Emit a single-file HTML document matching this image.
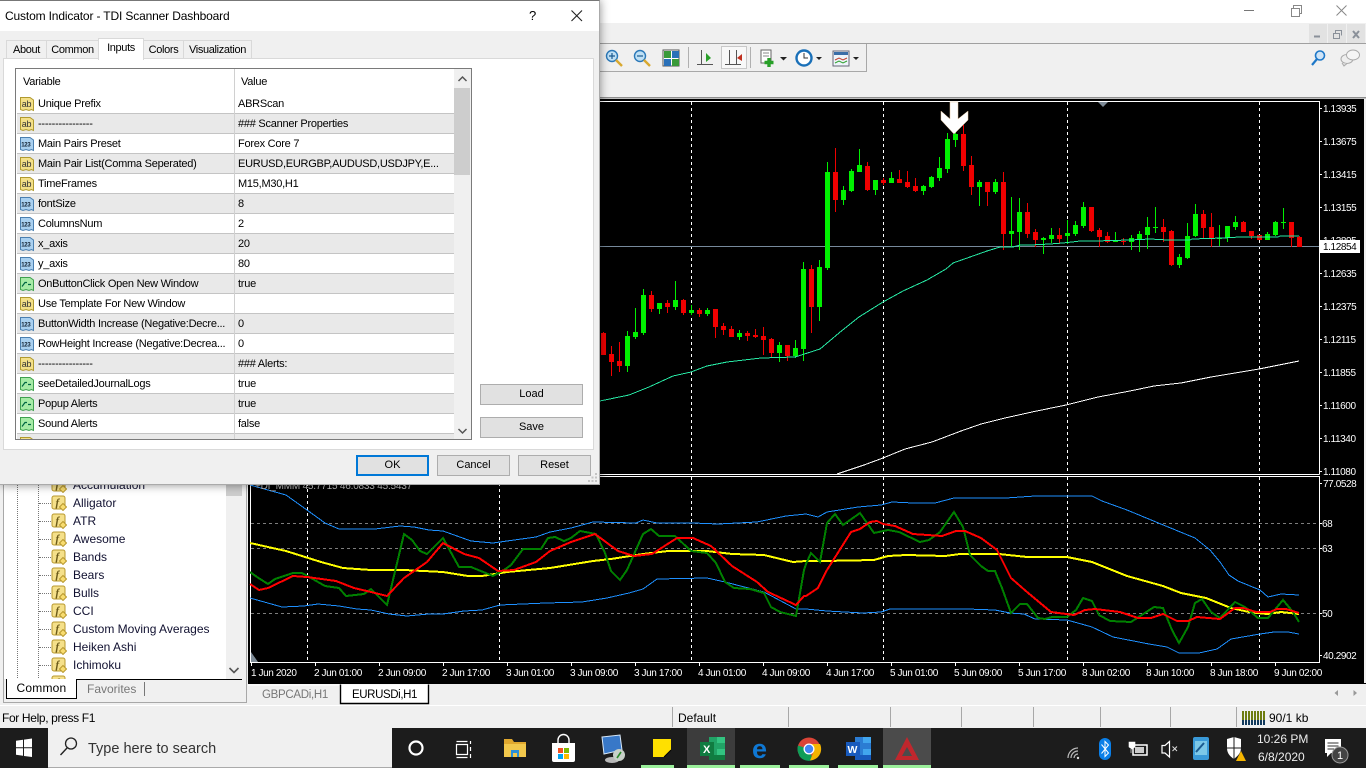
<!DOCTYPE html>
<html><head><meta charset="utf-8"><title>TDI Scanner</title>
<style>
*{box-sizing:border-box}
html,body{margin:0;padding:0;width:1366px;height:768px;overflow:hidden;background:#f0f0f0;font-family:"Liberation Sans",sans-serif;color:#000}
.a{position:absolute}
.t{position:absolute;white-space:nowrap;line-height:14px}
#dlg{position:absolute;left:0;top:0;width:600px;height:485px;background:#f0f0f0;box-shadow:0 0 9px rgba(0,0,0,.45);border-top:1px solid #777;border-right:1px solid #aaa;border-bottom:1px solid #aaa;font-size:11px;letter-spacing:-.25px}
.tab{position:absolute;top:40px;height:19px;background:#f0f0f0;border:1px solid #d9d9d9;text-align:center;line-height:18px;font-size:11px;letter-spacing:-.35px}
.row{position:absolute;left:1px;width:438px;height:20px;border-bottom:1px solid #c4c4c4;background:#fff}
.row.g{background:#e9e9e9}
.row .n{position:absolute;left:21px;top:2px;line-height:16px;white-space:nowrap}
.row .v{position:absolute;left:221px;top:2px;line-height:16px;white-space:nowrap}
.row svg{position:absolute;left:2px;top:2px}
.btn{position:absolute;background:#e1e1e1;border:1px solid #adadad;text-align:center;font-size:11px;letter-spacing:0}
.tr{position:absolute;left:73px;font-size:12px;line-height:14px;white-space:nowrap;color:#101030}
.dh{position:absolute;border-top:1px dotted #777;width:12px;left:39px}
.fi{position:absolute;left:51px}
.ln{shape-rendering:crispEdges}
</style></head><body>

<svg width="0" height="0" style="position:absolute">
<defs>
<symbol id="ab" viewBox="0 0 16 16"><path d="M1.5 1.5H11L14.5 4V14.5L12.500 13.500L10 14.500L7 13.500L4 14.500L1.500 13.500Z" fill="#f4e088" stroke="#b09a30"/><text x="2.7" y="11" font-size="9" font-family="Liberation Sans" fill="#333">ab</text></symbol>
<symbol id="n1" viewBox="0 0 16 16"><path d="M1.5 1.5H11L14.5 4V14.5L12.500 13.500L10 14.500L7 13.500L4 14.500L1.500 13.500Z" fill="#a9d0f0" stroke="#4a7fb0"/><text x="2.2" y="10.5" font-size="6" font-weight="bold" font-family="Liberation Sans" fill="#123">123</text></symbol>
<symbol id="gr" viewBox="0 0 16 16"><path d="M1.5 1.5H11L14.5 4V14.5L12.500 13.500L10 14.500L7 13.500L4 14.500L1.500 13.500Z" fill="#a6eba6" stroke="#3fa04f"/><path d="M3 10.500L6 6.500H8M9 8.500H12" fill="none" stroke="#064" stroke-width="1.2"/></symbol>
<symbol id="fx" viewBox="0 0 16 16"><rect x="1" y="1" width="13" height="13" rx="2" fill="#f5e08a" stroke="#b8982e"/><text x="4.5" y="11" font-size="11" font-style="italic" font-weight="bold" font-family="Liberation Serif" fill="#6b5a1a">f</text><path d="M12 8.500L15.500 12L12 15.500L8.500 12Z" fill="#f8dc70" stroke="#b8982e"/></symbol>
</defs>
</svg>

<!-- main window chrome -->
<div class="a" style="left:600px;top:0;width:766px;height:23px;background:#fff"></div>
<svg class="a" style="left:0;top:0" width="1366" height="768" font-family="Liberation Sans">
<!-- window buttons -->
<path d="M1244 10.500H1254" stroke="#777"/>
<path d="M1291.500 8.500H1299.500V16.500H1291.500ZM1293.500 8V5.500H1301.500V13.500H1300" fill="none" stroke="#888"/>
<path d="M1336.500 5.500L1346.500 15.500M1346.500 5.500L1336.500 15.500" stroke="#888"/>
<rect x="1309" y="24" width="18" height="19" fill="#e2e2e2"/><rect x="1328" y="24" width="18" height="19" fill="#e2e2e2"/><rect x="1347" y="24" width="18" height="19" fill="#e2e2e2"/>
<path d="M1314 36.500H1320" stroke="#8a9099" stroke-width="2"/>
<path d="M1333.500 33.500H1339.500V38.500H1333.500ZM1335.500 33V30.500H1341.500V35.500" fill="none" stroke="#8a9099"/>
<path d="M1353 31L1359 38M1359 31L1353 38" stroke="#8a9099" stroke-width="2"/>
<rect x="600" y="43" width="766" height="1" fill="#a0a0a0"/>
<path d="M600 71.500H866.500V44" fill="none" stroke="#a8a8a8"/>
<!-- toolbar icons -->
<g>
<circle cx="612" cy="56" r="5.500" fill="#bfe0f5" stroke="#2a78b8" stroke-width="1.4"/><path d="M609 56H615M612 53V59" stroke="#1a5a90" stroke-width="1.2"/><path d="M616 60L622 66" stroke="#d8a830" stroke-width="2.4"/>
<circle cx="640" cy="56" r="5.500" fill="#bfe0f5" stroke="#2a78b8" stroke-width="1.4"/><path d="M637 56H643" stroke="#1a5a90" stroke-width="1.2"/><path d="M644 60L650 66" stroke="#d8a830" stroke-width="2.4"/>
<rect x="663" y="50" width="16" height="16" fill="#fff" stroke="#555"/><rect x="664" y="51" width="7" height="7" fill="#3a9a3a"/><rect x="672" y="51" width="7" height="7" fill="#2a70b8"/><rect x="664" y="59" width="7" height="7" fill="#2a70b8"/><rect x="672" y="59" width="7" height="7" fill="#3a9a3a"/>
<path d="M688.500 47V68M750.500 47V68" stroke="#b0b0b0"/>
<path d="M701.500 50V64M697 64.500H713" stroke="#555" fill="none"/><path d="M706 53L711 58L706 62Z" fill="#2aa02a"/>
<rect x="721.500" y="46.500" width="25" height="22" fill="#f8f8f8" stroke="#c8c8c8"/>
<path d="M729.500 50V64M725 64.500H741M736.500 50V64" stroke="#555" fill="none"/><path d="M742 54L737 58L742 61Z" fill="#c03020"/>
<rect x="761" y="50" width="10" height="13" fill="#fff" stroke="#666"/><path d="M763 53H769M763 56H769" stroke="#888"/><path d="M769 58V67M764.500 62.500H773.500" stroke="#28a028" stroke-width="3.4"/>
<path d="M780 57H787L783.500 60.500Z" fill="#222"/>
<circle cx="804" cy="58" r="7.500" fill="#fff" stroke="#1a70b8" stroke-width="2.4"/><path d="M804 53V58H808" stroke="#333" fill="none"/>
<path d="M816 57H822L819 60Z" fill="#222"/>
<rect x="833" y="51" width="16" height="15" fill="#eef4fa" stroke="#667"/><rect x="834" y="52" width="14" height="3" fill="#3a6ea8"/><path d="M835 60L839 58L843 60L847 58" stroke="#c04030" fill="none"/><path d="M835 63L839 61L843 63L847 61" stroke="#30a030" fill="none"/>
<path d="M853 57H859L856 60Z" fill="#222"/>
<circle cx="1320" cy="55.500" r="4.500" fill="#cfe4f7" stroke="#1e78c8" stroke-width="1.6"/><path d="M1317 59L1312 65" stroke="#1e78c8" stroke-width="2.2"/>
<ellipse cx="1347" cy="59" rx="6" ry="4.500" fill="#eee" stroke="#aaa"/><ellipse cx="1353" cy="55" rx="6.500" ry="5" fill="#f5f5f5" stroke="#aaa"/><path d="M1342 63L1344 66L1347 63.500" fill="#ddd" stroke="#aaa"/>
</g>
<rect x="600" y="97" width="766" height="1.500" fill="#8e8e8e"/>

<!-- chart background -->
<rect x="248" y="99" width="1116" height="584" fill="#000"/>
<path d="M250 101.500H1319.500V474.500M250 474.500H1319.500M250 476.500H1319.500V662.500H250.500V476" fill="none" stroke="#fff"/>
<!-- grid verticals -->
<path d="M691.500 102V474M883.500 102V474M1067.500 102V474M1259.500 102V474M307.500 477V662M499.500 477V662M691.500 477V662M883.500 477V662M1067.500 477V662M1259.500 477V662" stroke="#fff" stroke-dasharray="3 3"/>
<!-- sub horizontals -->
<path d="M251 523.500H1319M251 548.500H1319M251 613.500H1319" stroke="#7d7d7d" stroke-dasharray="3 3"/>
<!-- price line -->
<path d="M600 246.500H1319" stroke="#76899b"/>
<path d="M1098 102H1108L1103 107Z" fill="#7d8a96"/>
<path d="M251 652V662H258Z" fill="#7d8a96"/>

<!-- candles: wicks -->
<path stroke="#00f000" fill="none" d="M627.500 331V372M635.500 308V339M643.500 289V335M659.500 303V314M675.500 281V310M691.500 305V315M707.500 308V316M739.500 330V340M779.500 342V362M795.500 340V358M803.500 262V361M819.500 260V321M827.500 162V270M843.500 186V205M851.500 169V192M859.500 149V172M875.500 180V195M891.500 172V183M923.500 185V195M931.500 176V188M939.500 157V181M947.500 133V173M955.500 130V147M979.500 180V206M995.500 179V194M1011.500 197V247M1019.500 198V250M1043.500 237V254M1051.500 228V243M1067.500 220V244M1075.500 221V236M1083.500 202V228M1115.500 232V242M1131.500 235V250M1139.500 231V252M1147.500 217V249M1155.500 207V233M1179.500 254V268M1187.500 223V259M1195.500 204V237M1219.500 225V246M1227.500 226V242M1235.500 216V230M1267.500 232V240M1275.500 221V236M1283.500 208V229"/>
<path stroke="#f00000" fill="none" d="M603.500 332V355M611.500 346V376M619.500 342V372M651.500 291V312M667.500 300V313M683.500 299V315M699.500 308V317M715.500 309V338M723.500 323V335M731.500 326V337M747.500 331V341M755.500 329V338M763.500 327V355M771.500 338V357M787.500 345V361M811.500 265V333M835.500 148V212M867.500 162V191M883.500 178V185M899.500 170V183M907.500 171V188M915.500 178V192M963.500 125V171M971.500 156V195M987.500 182V206M1003.500 172V250M1027.500 203V238M1035.500 229V247M1059.500 228V244M1091.500 207V232M1099.500 228V247M1107.500 232V243M1123.500 238V245M1163.500 219V242M1171.500 230V266M1203.500 210V239M1211.500 213V247M1243.500 221V232M1251.500 231V239M1259.500 235V240M1291.500 222V247M1299.500 236V247"/>
<!-- candles: bodies -->
<path stroke="#00f000" stroke-width="5" fill="none" d="M627.500 336V366M635.500 332V337M643.500 295V333M659.500 303V309M675.500 300V307M691.500 310V313M707.500 310V314M739.500 333V337M779.500 345V353M795.500 348V356M803.500 269V349M819.500 267V307M827.500 172V268M843.500 190V200M851.500 171V191M859.500 165V172M875.500 180V190M891.500 178V183M923.500 186V191M931.500 177V187M939.500 168V178M947.500 139V169M955.500 134V140M979.500 182V187M995.500 182V192M1011.500 231V234M1019.500 212V232M1043.500 238V240M1051.500 235V239M1067.500 233V236M1075.500 225V234M1083.500 207V226M1115.500 240V242M1131.500 238V242M1139.500 234V239M1147.500 227V235M1155.500 227V228M1179.500 257V265M1187.500 236V258M1195.500 214V236M1219.500 238V239M1227.500 226V238M1235.500 222V227M1267.500 234V240M1275.500 222V235M1283.500 222V223"/>
<path stroke="#f00000" stroke-width="5" fill="none" d="M603.500 333V355M611.500 354V362M619.500 361V366M651.500 295V309M667.500 303V307M683.500 300V313M699.500 310V314M715.500 309V327M723.500 326V330M731.500 329V337M747.500 333V336M755.500 335V337M763.500 336V340M771.500 339V353M787.500 345V356M811.500 269V307M835.500 172V200M867.500 166V190M883.500 180V183M899.500 179V183M907.500 182V187M915.500 186V191M963.500 134V166M971.500 165V187M987.500 182V192M1003.500 182V234M1027.500 212V234M1035.500 232V240M1059.500 235V239M1091.500 207V231M1099.500 230V237M1107.500 236V242M1123.500 241V242M1163.500 227V232M1171.500 231V265M1203.500 214V228M1211.500 227V239M1243.500 222V232M1251.500 231V236M1259.500 235V240M1291.500 222V238M1299.500 237V247"/>

<!-- MA lines -->
<polyline class="ln" fill="none" stroke="#27e8a4" stroke-width="1" points="600,401 629,395 649,387 673,376 691,372 707,366 727,362 761,358 795,357 820,349 839,333 859,317 883,302 903,291 927,280 946,269 953,263 970,257 987,251 1000,247 1013,247 1020,245 1030,245 1050,244 1063,243 1072,242 1080,241 1095,241 1130,240 1150,239 1168,240 1190,240 1192,239 1223,238 1240,237 1278,237 1280,236 1299,236"/>
<polyline class="ln" fill="none" stroke="#fff" stroke-width="1" points="837,474 864,465 883,458 905,449 932,442 961,431 981,424 1005,418 1032,412 1066,405 1098,397 1130,391 1154,386 1181,383 1211,377 1259,369 1299,361"/>

<!-- sub indicators -->
<polyline class="ln" fill="none" stroke="#1e90ff" stroke-width="1" points="250,485 286,495 307,510 325,523 339,529 375,529 400,526 414,527 429,530 443,531 471,541 493,543 507,541 536,537 550,532 571,528 593,522 636,523 643,520 657,523 693,523 718,524 757,522 786,516 806,514 818,517 827,512 858,507 881,505 892,502 913,503 935,503 954,498 1006,498 1035,496 1092,496 1102,501 1127,510 1156,522 1195,538 1210,550 1220,562 1229,575 1238,581 1260,590 1268,597 1281,594 1299,595"/>
<polyline class="ln" fill="none" stroke="#1e90ff" stroke-width="1" points="250,598 282,607 304,606 318,604 339,606 357,609 371,610 389,614 407,616 429,614 443,614 464,611 482,610 500,605 546,603 582,602 607,598 629,593 643,589 657,579 707,578 725,582 764,592 796,609 806,609 827,611 863,613 881,612 890,609 967,609 995,610 1010,613 1024,614 1035,619 1067,620 1092,627 1113,637 1149,644 1167,647 1179,653 1199,653 1217,649 1231,639 1260,634 1274,632 1288,632 1299,634"/>
<polyline class="ln" fill="none" stroke="#ffff00" stroke-width="2" points="250,543 286,551 321,562 343,568 371,570 404,570 443,572 468,576 482,576 507,572 550,568 593,561 611,559 643,554 668,551 707,551 732,554 764,555 793,562 806,561 824,561 874,560 888,556 906,555 945,556 960,554 999,554 1027,557 1067,557 1092,562 1127,576 1163,586 1181,593 1206,598 1231,608 1249,612 1267,614 1281,612 1299,614"/>
<polyline class="ln" fill="none" stroke="#008000" stroke-width="2" points="250,572 257,577 268,584 275,579 293,573 302,573 311,578 325,586 339,588 346,596 364,594 371,589 387,605 404,534 412,540 420,551 427,554 443,538 454,558 459,567 471,567 493,576 504,570 511,565 523,549 541,549 548,538 555,537 564,541 571,538 580,531 596,534 605,553 611,571 620,580 627,570 643,534 651,529 659,536 675,536 691,551 707,553 716,563 725,582 734,588 750,589 764,593 771,607 780,612 796,616 804,570 806,564 811,553 820,562 827,523 835,514 843,525 860,513 874,533 888,530 899,532 920,542 929,540 940,532 954,512 963,527 970,555 981,566 988,571 995,571 1002,588 1011,613 1020,604 1027,604 1038,618 1045,619 1052,617 1067,617 1076,610 1083,598 1092,601 1099,615 1110,621 1131,622 1154,607 1163,608 1172,630 1179,643 1188,627 1195,603 1202,599 1211,612 1220,618 1235,602 1245,607 1258,618 1268,618 1283,600 1293,612 1299,622"/>
<polyline class="ln" fill="none" stroke="#ff0000" stroke-width="2" points="250,584 259,590 268,588 293,576 307,577 336,581 354,588 371,592 387,596 404,578 427,562 443,543 464,554 479,558 498,571 514,570 536,562 550,551 571,542 595,534 618,551 634,556 652,554 677,538 693,538 711,546 732,566 757,582 768,592 796,605 804,596 806,596 818,588 827,570 851,532 860,529 870,522 877,521 883,524 895,526 913,534 942,536 956,531 965,531 981,538 997,550 1011,578 1027,592 1051,612 1074,615 1085,610 1095,609 1120,612 1138,618 1151,618 1163,614 1177,621 1188,621 1197,617 1220,619 1235,608 1243,608 1256,612 1270,612 1277,609 1286,609 1299,613"/>

<!-- arrow -->
<path d="M950 102H958V119L968 111V120L954 134L941 120V111L950 119Z" fill="#fff" stroke="#e8c8a0" stroke-width=".5"/>

<!-- axis -->
<g font-size="10" letter-spacing="-.4" fill="#fff">
<text x="1323" y="112">1.13935</text><text x="1323" y="145">1.13675</text><text x="1323" y="178">1.13415</text><text x="1323" y="211">1.13155</text><text x="1323" y="244">1.12895</text>
<text x="1323" y="277">1.12635</text><text x="1323" y="310">1.12375</text><text x="1323" y="343">1.12115</text><text x="1323" y="376">1.11855</text><text x="1323" y="409">1.11600</text><text x="1323" y="442">1.11340</text><text x="1323" y="475">1.11080</text>
<text x="1323" y="487">77.0528</text><text x="1322" y="527">68</text><text x="1322" y="552">63</text><text x="1322" y="617">50</text><text x="1323" y="659">40.2902</text>
<text x="251" y="676">1 Jun 2020</text><text x="314" y="676">2 Jun 01:00</text><text x="378" y="676">2 Jun 09:00</text><text x="442" y="676">2 Jun 17:00</text><text x="506" y="676">3 Jun 01:00</text><text x="570" y="676">3 Jun 09:00</text><text x="634" y="676">3 Jun 17:00</text><text x="698" y="676">4 Jun 01:00</text><text x="762" y="676">4 Jun 09:00</text><text x="826" y="676">4 Jun 17:00</text><text x="890" y="676">5 Jun 01:00</text><text x="954" y="676">5 Jun 09:00</text><text x="1018" y="676">5 Jun 17:00</text><text x="1082" y="676">8 Jun 02:00</text><text x="1146" y="676">8 Jun 10:00</text><text x="1210" y="676">8 Jun 18:00</text><text x="1274" y="676">9 Jun 02:00</text>
</g>
<path d="M1319 108.500H1322M1319 141.500H1322M1319 174.500H1322M1319 207.500H1322M1319 240.500H1322M1319 273.500H1322M1319 306.500H1322M1319 339.500H1322M1319 372.500H1322M1319 405.500H1322M1319 438.500H1322M1319 471.500H1322M1319 483.500H1322M1319 523.500H1322M1319 548.500H1322M1319 613.500H1322M1319 655.500H1322M251.500 662V666M315.500 662V666M379.500 662V666M443.500 662V666M507.500 662V666M571.500 662V666M635.500 662V666M699.500 662V666M763.500 662V666M827.500 662V666M891.500 662V666M955.500 662V666M1019.500 662V666M1083.500 662V666M1147.500 662V666M1211.500 662V666M1275.500 662V666" stroke="#fff"/>
<rect x="1320" y="240" width="40" height="13" fill="#fff"/>
<text x="1323" y="250" font-size="10" letter-spacing="-.4" fill="#000">1.12854</text>
<text x="255" y="489" font-size="10" letter-spacing="-.2" fill="#bbb">+DI_MMM 45.7715 46.0833 45.5437</text>

<!-- document tabs -->
<rect x="248" y="683" width="1118" height="1" fill="#000"/>
<rect x="248" y="684" width="1118" height="21" fill="#f0f0f0"/>
<path d="M247.500 685H339.500" stroke="#fff"/>
<path d="M340.500 684.500V703.500H428.500V684.500" fill="#fff" stroke="#000" stroke-width="1.4"/>
<text x="262" y="698" font-size="11.500" fill="#777" letter-spacing="-.3">GBPCADi,H1</text>
<text x="352" y="698" font-size="11.500" fill="#000" letter-spacing="-.4">EURUSDi,H1</text>
<path d="M1338 690V696L1334.500 693ZM1353.500 690V696L1357 693Z" fill="#999"/>
</svg>

<!-- navigator -->
<div class="a" style="left:0;top:480px;width:248px;height:226px;background:#f0f0f0">
  <div class="a" style="left:3px;top:0;width:244px;height:223px;border-right:1px solid #a8a8a8;border-left:1px solid #a8a8a8;border-bottom:1px solid #a8a8a8"></div>
  <div class="a" style="left:4px;top:0;width:222px;height:199px;background:#fff;overflow:hidden">
    <div class="a" style="left:13px;top:0;height:200px;border-left:1px dotted #777"></div>
    <div class="a" style="left:34px;top:0;height:200px;border-left:1px dotted #777"></div>
  </div>
  <div class="a" style="left:226px;top:0;width:16px;height:199px;background:#f0f0f0"></div>
  <div class="a" style="left:226px;top:0;width:16px;height:16px;background:#cdcdcd"></div>
</div>
<div class="a" style="left:0;top:480px;width:226px;height:199px;overflow:hidden">
  <svg class="fi" style="top:-3px" width="16" height="16"><use href="#fx"/></svg><div class="tr" style="top:-2px">Accumulation</div>
  <div class="dh" style="top:23px"></div><svg class="fi" style="top:15px" width="16" height="16"><use href="#fx"/></svg><div class="tr" style="top:16px">Alligator</div>
  <div class="dh" style="top:41px"></div><svg class="fi" style="top:33px" width="16" height="16"><use href="#fx"/></svg><div class="tr" style="top:34px">ATR</div>
  <div class="dh" style="top:59px"></div><svg class="fi" style="top:51px" width="16" height="16"><use href="#fx"/></svg><div class="tr" style="top:52px">Awesome</div>
  <div class="dh" style="top:77px"></div><svg class="fi" style="top:69px" width="16" height="16"><use href="#fx"/></svg><div class="tr" style="top:70px">Bands</div>
  <div class="dh" style="top:95px"></div><svg class="fi" style="top:87px" width="16" height="16"><use href="#fx"/></svg><div class="tr" style="top:88px">Bears</div>
  <div class="dh" style="top:113px"></div><svg class="fi" style="top:105px" width="16" height="16"><use href="#fx"/></svg><div class="tr" style="top:106px">Bulls</div>
  <div class="dh" style="top:131px"></div><svg class="fi" style="top:123px" width="16" height="16"><use href="#fx"/></svg><div class="tr" style="top:124px">CCI</div>
  <div class="dh" style="top:149px"></div><svg class="fi" style="top:141px" width="16" height="16"><use href="#fx"/></svg><div class="tr" style="top:142px">Custom Moving Averages</div>
  <div class="dh" style="top:167px"></div><svg class="fi" style="top:159px" width="16" height="16"><use href="#fx"/></svg><div class="tr" style="top:160px">Heiken Ashi</div>
  <div class="dh" style="top:185px"></div><svg class="fi" style="top:177px" width="16" height="16"><use href="#fx"/></svg><div class="tr" style="top:178px">Ichimoku</div>
  <svg class="fi" style="top:195px" width="16" height="16"><use href="#fx"/></svg>
</div>
<svg class="a" style="left:228px;top:666px" width="12" height="10"><path d="M1.500 2L6 6.500L10.500 2" fill="none" stroke="#555" stroke-width="1.6"/></svg>
<div class="a" style="left:77px;top:679px;width:165px;height:1px;background:#000"></div>
<div class="a" style="left:6px;top:679px;width:71px;height:20px;background:#fff;border:1px solid #000;border-top:0;border-right-width:1.5px;border-bottom-width:1.5px;font-size:12px;text-align:center;line-height:19px;letter-spacing:.2px">Common</div>
<div class="t" style="left:87px;top:682px;font-size:12px;color:#777">Favorites</div>
<div class="a" style="left:144px;top:682px;width:1px;height:14px;background:#777"></div>

<!-- status bar -->
<div class="a" style="left:0;top:705px;width:1366px;height:1px;background:#fff"></div>
<div class="a" style="left:0;top:706px;width:1366px;height:22px;background:#f0f0f0"></div>
<div class="t" style="left:2px;top:711px;font-size:12px;letter-spacing:-.35px">For Help, press F1</div>
<div class="t" style="left:678px;top:711px;font-size:12px">Default</div>
<div class="t" style="left:1269px;top:711px;font-size:12px">90/1 kb</div>
<svg class="a" style="left:0;top:706px" width="1366" height="22">
<path d="M672.500 1V21M788.500 1V21M890.500 1V21M961.500 1V21M1033.500 1V21M1100.500 1V21M1170.500 1V21M1236.500 1V21" stroke="#a8a8a8"/>
<path d="M1242 5h23v9h-23z" fill="#6e7d10"/>
<path d="M1242 14h23v5h-23z" fill="#123a5c"/>
<path d="M1244.500 5v14M1247.500 5v14M1250.500 5v14M1253.500 5v14M1256.500 5v14M1259.500 5v14M1262.500 5v14" stroke="#f0f0f0"/>
</svg>

<!-- taskbar -->
<div class="a" style="left:0;top:728px;width:1366px;height:40px;background:#1c1c1c"></div>
<div class="a" style="left:48px;top:728px;width:344px;height:40px;background:#f0f0f0;border-bottom:1px solid #aaa"></div>
<div class="t" style="left:88px;top:740px;font-size:14.500px;line-height:18px;color:#333">Type here to search</div>
<div class="a" style="left:687px;top:728px;width:48px;height:40px;background:#3c3c3c"></div>
<div class="a" style="left:883px;top:728px;width:48px;height:40px;background:#4b4b4b"></div>
<svg class="a" style="left:0;top:728px" width="1366" height="40">
<path d="M16 6.800L23 5.800V13.300H16ZM24 5.600L32 4.500V13.300H24ZM16 14.300H23V21.800L16 20.800ZM24 14.300H32V23L24 22Z" fill="#fff" transform="translate(0,6)"/>
<circle cx="71" cy="15.500" r="5.500" fill="none" stroke="#222" stroke-width="1.3"/><path d="M67 20L60.500 27" stroke="#222" stroke-width="1.4"/>
<circle cx="416" cy="20" r="6.500" fill="none" stroke="#fff" stroke-width="2.2"/>
<path d="M456.500 13.500H467.500M456.500 29.500H467.500M456.500 16.500H467.500V26.500H456.500ZM470.500 13V16M470.500 19V23M470.500 26V30" fill="none" stroke="#fff" stroke-width="1.2"/>
<path d="M504 11h8l2 3h12v8h-22z" fill="#e0a82e"/><path d="M504 16h22v13h-22z" fill="#f2c84c"/><path d="M511 29v-7h8v7" fill="#2b8fd8"/><rect x="513" y="25" width="4" height="4" fill="#f2c84c"/>
<path d="M552 15h23v17a2 2 0 0 1-2 2h-19a2 2 0 0 1-2-2z" fill="#fff"/><path d="M558 15v-3a5 5 0 0 1 11 0v3" fill="none" stroke="#fff" stroke-width="1.4"/><rect x="558" y="20" width="5" height="5" fill="#f25022"/><rect x="564" y="20" width="5" height="5" fill="#7fba00"/><rect x="558" y="26" width="5" height="5" fill="#00a4ef"/><rect x="564" y="26" width="5" height="5" fill="#ffb900"/>
<path d="M602 9L620 7L622 22L604 26Z" fill="#3878c8" stroke="#d8e8f8"/><ellipse cx="612" cy="32" rx="7" ry="3" fill="#b8b8b8"/><circle cx="619" cy="27" r="6" fill="#c8d0c8"/><path d="M617 30L621 24" stroke="#2a8a2a" stroke-width="1.6"/>
<rect x="653" y="11" width="18" height="18" fill="#ffe000"/><path d="M671 22V29H664Z" fill="#1c1c1c"/><path d="M664 29L671 22" stroke="#000"/>
<path d="M709 9H725V32H709Z" fill="#21a366"/><path d="M717 9H725V15H717ZM717 21H725V27H717Z" fill="#33c481"/><path d="M709 27H725V32H709Z" fill="#107c41"/><rect x="700" y="14" width="14" height="14" fill="#107c41"/><text x="703" y="25" font-size="11" font-weight="bold" fill="#fff">X</text>
<text x="752" y="30" font-size="27" font-weight="bold" fill="#0f78d4" font-family="Liberation Sans">e</text>
<circle cx="809" cy="21" r="11.500" fill="#db4437"/><path d="M809 21L799 27.500A11.500 11.500 0 0 0 813 32Z" fill="#0f9d58"/><path d="M798 17.500A11.500 11.500 0 0 0 806 32L812 22Z" fill="#0f9d58"/><path d="M809 16H820A11.500 11.500 0 0 1 810 32.500L814 23Z" fill="#f4b400"/><circle cx="809" cy="21" r="5.500" fill="#fff"/><circle cx="809" cy="21" r="4.200" fill="#4285f4"/>
<path d="M855 9H871V32H855Z" fill="#2b7cd3"/><path d="M863 9H871V15H863ZM863 21H871V27H863Z" fill="#41a5ee"/><path d="M855 27H871V32H855Z" fill="#185abd"/><rect x="846" y="14" width="14" height="14" fill="#185abd"/><text x="847.500" y="25" font-size="10.500" font-weight="bold" fill="#fff">W</text>
<path d="M907 9L919 32H895Z M907 19L902 28H912Z" fill="#c0272d" fill-rule="evenodd"/>
<g fill="none" stroke="#bbb" stroke-width="1.2"><path d="M1068 30A10 10 0 0 1 1078 20"/><path d="M1071 30A7 7 0 0 1 1078 23"/><path d="M1074 30A4 4 0 0 1 1078 26"/></g><circle cx="1078" cy="30" r="1.200" fill="#ddd"/>
<rect x="1099" y="10" width="12" height="22" rx="6" fill="#0a7fe8"/><path d="M1101.500 16.500L1108.500 25L1105 28.500V13.500L1108.500 17L1101.500 25.500" fill="none" stroke="#fff"/>
<rect x="1133" y="17" width="14" height="10" fill="none" stroke="#fff" stroke-width="1.500"/><rect x="1135" y="19" width="9" height="6" fill="#ccc"/><path d="M1129 14h6v5l-3 2-3-2zM1131 21v4" fill="#fff" stroke="#fff" stroke-width=".6"/>
<path d="M1162 17.500H1165L1169.500 13.500V29L1165 25H1162Z" fill="none" stroke="#fff" stroke-width="1.200"/><path d="M1172.500 18.500L1177 23M1177 18.500L1172.500 23" stroke="#ddd"/>
<rect x="1193" y="9" width="16" height="23" rx="2" fill="#3a9ad8"/><rect x="1195" y="13" width="12" height="14" fill="#7cc8e8"/><path d="M1196 24L1204 15" stroke="#1a5a90" stroke-width="2"/>
<path d="M1227 11L1234 9L1241 11V20C1241 26 1236 29 1234 31C1231 29 1227 26 1227 20Z" fill="#fff"/><path d="M1234 9V31" stroke="#1c1c1c"/><path d="M1227 20H1241" stroke="#1c1c1c"/><path d="M1236 33L1241 23L1246 33Z" fill="#f4b400"/>
<rect x="1325" y="11" width="16" height="14" fill="#fff"/><path d="M1327.500 15H1338.500M1327.500 18H1338.500M1327.500 21H1334" stroke="#333"/><path d="M1327 25V29L1331 25Z" fill="#fff"/>
<circle cx="1340" cy="27" r="8" fill="#444" stroke="#999"/><text x="1337" y="31" font-size="11" fill="#fff">1</text>
</svg>
<div class="t" style="left:1257px;top:732px;font-size:12px;color:#eee">10:26 PM</div>
<div class="t" style="left:1258px;top:750px;font-size:12px;color:#eee">6/8/2020</div>
<div class="a" style="left:687px;top:765px;width:48px;height:3px;background:#9bf09b"></div>
<div class="a" style="left:740px;top:765px;width:40px;height:3px;background:#9bf09b"></div>
<div class="a" style="left:789px;top:765px;width:40px;height:3px;background:#9bf09b"></div>
<div class="a" style="left:838px;top:765px;width:40px;height:3px;background:#9bf09b"></div>
<div class="a" style="left:883px;top:765px;width:48px;height:3px;background:#9bf09b"></div>
<div class="a" style="left:641px;top:765px;width:33px;height:3px;background:#9bf09b"></div>

<!-- dialog -->
<div id="dlg">
  <div class="a" style="left:0;top:0;width:599px;height:30px;background:#fff"></div>
  <div class="t" style="left:5px;top:8px;font-size:12px;letter-spacing:-.15px;line-height:15px">Custom Indicator - TDI Scanner Dashboard</div>
  <div class="t" style="left:529px;top:7px;font-size:13px;line-height:15px">?</div>
  <svg class="a" style="left:571px;top:9px" width="12" height="12"><path d="M.5 .5L11 11M11 .5L.5 11" stroke="#222" stroke-width="1.100"/></svg>
  <div class="a" style="left:3px;top:57px;width:591px;height:392px;background:#fff;border:1px solid #d9d9d9"></div>
  <div class="tab" style="left:6px;width:41px;top:39px">About</div>
  <div class="tab" style="left:46px;width:53px;top:39px">Common</div>
  <div class="tab" style="left:98px;width:46px;top:37px;height:22px;background:#fff;border-bottom:0;line-height:19px;z-index:2">Inputs</div>
  <div class="tab" style="left:143px;width:41px;top:39px">Colors</div>
  <div class="tab" style="left:183px;width:69px;top:39px">Visualization</div>

  <div class="a" style="left:15px;top:67px;width:457px;height:372px;background:#fff;border:1px solid #7a7a7a;overflow:hidden">
    <div class="a" style="left:0;top:0;width:438px;height:25px;background:#fff"></div>
    <div class="t" style="left:7px;top:6px">Variable</div>
    <div class="t" style="left:225px;top:6px">Value</div>
    <div class="a" style="left:218px;top:0;width:1px;height:370px;background:#d0d0d0;z-index:3"></div>
    <div class="row" style="top:25px"><svg width="16" height="16"><use href="#ab"/></svg><span class="n">Unique Prefix</span><span class="v">ABRScan</span></div>
    <div class="row g" style="top:45px"><svg width="16" height="16"><use href="#ab"/></svg><span class="n">----------------</span><span class="v">### Scanner Properties</span></div>
    <div class="row" style="top:65px"><svg width="16" height="16"><use href="#n1"/></svg><span class="n">Main Pairs Preset</span><span class="v">Forex Core 7</span></div>
    <div class="row g" style="top:85px"><svg width="16" height="16"><use href="#ab"/></svg><span class="n">Main Pair List(Comma Seperated)</span><span class="v">EURUSD,EURGBP,AUDUSD,USDJPY,E...</span></div>
    <div class="row" style="top:105px"><svg width="16" height="16"><use href="#ab"/></svg><span class="n">TimeFrames</span><span class="v">M15,M30,H1</span></div>
    <div class="row g" style="top:125px"><svg width="16" height="16"><use href="#n1"/></svg><span class="n">fontSize</span><span class="v">8</span></div>
    <div class="row" style="top:145px"><svg width="16" height="16"><use href="#n1"/></svg><span class="n">ColumnsNum</span><span class="v">2</span></div>
    <div class="row g" style="top:165px"><svg width="16" height="16"><use href="#n1"/></svg><span class="n">x_axis</span><span class="v">20</span></div>
    <div class="row" style="top:185px"><svg width="16" height="16"><use href="#n1"/></svg><span class="n">y_axis</span><span class="v">80</span></div>
    <div class="row g" style="top:205px"><svg width="16" height="16"><use href="#gr"/></svg><span class="n">OnButtonClick Open New Window</span><span class="v">true</span></div>
    <div class="row" style="top:225px"><svg width="16" height="16"><use href="#ab"/></svg><span class="n">Use Template For New Window</span></div>
    <div class="row g" style="top:245px"><svg width="16" height="16"><use href="#n1"/></svg><span class="n">ButtonWidth Increase (Negative:Decre...</span><span class="v">0</span></div>
    <div class="row" style="top:265px"><svg width="16" height="16"><use href="#n1"/></svg><span class="n">RowHeight Increase (Negative:Decrea...</span><span class="v">0</span></div>
    <div class="row g" style="top:285px"><svg width="16" height="16"><use href="#ab"/></svg><span class="n">----------------</span><span class="v">### Alerts:</span></div>
    <div class="row" style="top:305px"><svg width="16" height="16"><use href="#gr"/></svg><span class="n">seeDetailedJournalLogs</span><span class="v">true</span></div>
    <div class="row g" style="top:325px"><svg width="16" height="16"><use href="#gr"/></svg><span class="n">Popup Alerts</span><span class="v">true</span></div>
    <div class="row" style="top:345px"><svg width="16" height="16"><use href="#gr"/></svg><span class="n">Sound Alerts</span><span class="v">false</span></div>
    <div class="row g" style="top:365px"><svg width="16" height="16"><use href="#ab"/></svg></div>
    <div class="a" style="left:438px;top:0;width:17px;height:370px;background:#f0f0f0"></div>
    <div class="a" style="left:438px;top:19px;width:16px;height:87px;background:#cdcdcd"></div>
    <svg class="a" style="left:441px;top:6px" width="11" height="8"><path d="M1.500 6L5.500 2L9.500 6" fill="none" stroke="#555" stroke-width="1.500"/></svg>
    <svg class="a" style="left:441px;top:358px" width="11" height="8"><path d="M1.500 2L5.500 6L9.500 2" fill="none" stroke="#555" stroke-width="1.500"/></svg>
  </div>

  <div class="btn" style="left:480px;top:383px;width:103px;height:21px;line-height:19px">Load</div>
  <div class="btn" style="left:480px;top:416px;width:103px;height:21px;line-height:19px">Save</div>
  <div class="btn" style="left:356px;top:454px;width:73px;height:21px;line-height:17px;border:2px solid #0078d7">OK</div>
  <div class="btn" style="left:437px;top:454px;width:73px;height:21px;line-height:19px">Cancel</div>
  <div class="btn" style="left:518px;top:454px;width:73px;height:21px;line-height:19px">Reset</div>
  <svg class="a" style="left:587px;top:471px" width="11" height="11"><path d="M8 1h2v2H8zM8 4.500h2v2H8zM4.500 4.500h2v2h-2zM8 8h2v2H8zM4.500 8h2v2h-2zM1 8h2v2H1z" fill="#c4c4c4"/></svg>
</div>
</body></html>
